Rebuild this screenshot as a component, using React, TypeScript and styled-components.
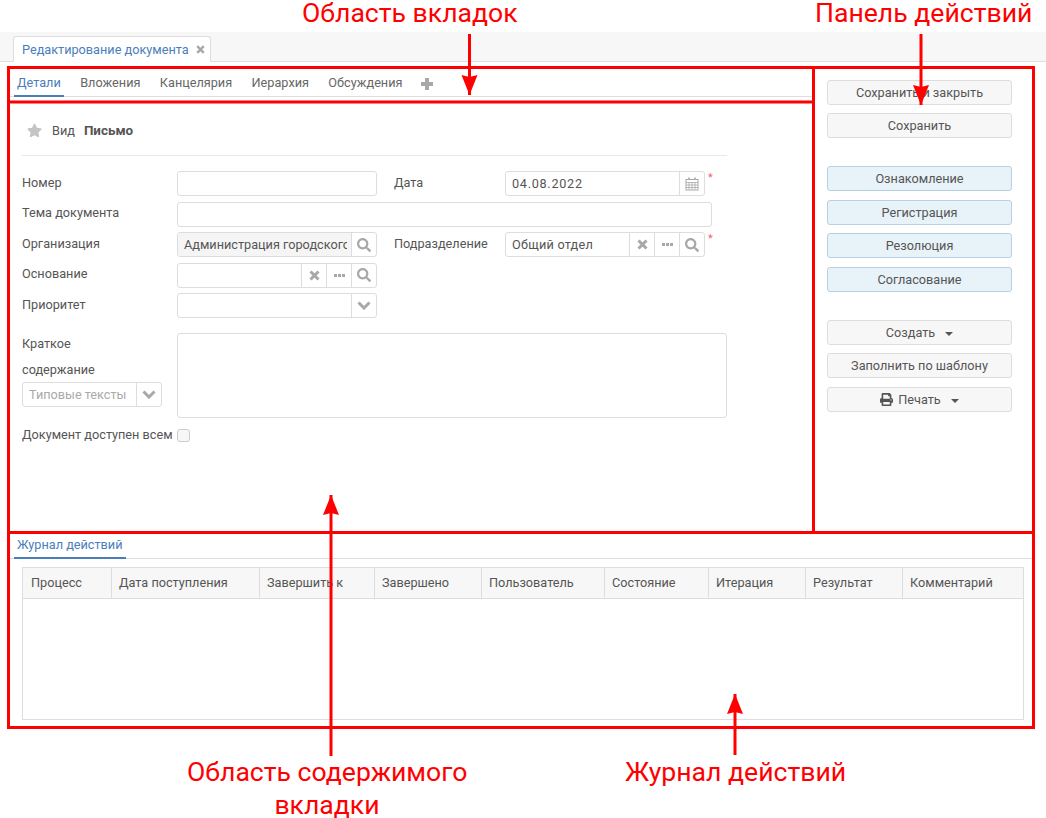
import React from 'react'
import styled, { createGlobalStyle, css } from 'styled-components'
import { FaPrint, FaSearch, FaStar } from 'react-icons/fa'

const GlobalStyle = createGlobalStyle`
  html, body {
    margin: 0;
    background: #fff;
  }
  body {
    color: #555;
    font: 12.7px/18px Roboto, "Liberation Sans", sans-serif;
  }
`

const Page = styled.div`
  position: relative;
  width: 1046px;
  height: 818px;
  overflow: hidden;
`

const DocStrip = styled.div`
  display: flex;
  align-items: flex-end;
  height: 29px;
  margin-top: 32px;
  padding-left: 13px;
  background: #f7f7f7;
  border-bottom: 1px solid #ddd;
`

const DocTab = styled.div`
  display: flex;
  align-items: center;
  gap: 7px;
  height: 25px;
  margin-bottom: -1px;
  padding: 0 5px 0 8px;
  color: #4a7ebb;
  background: #fff;
  border: 1px solid #ddd;
  border-bottom: 0;
  border-radius: 3px 3px 0 0;
`

const Workspace = styled.div`
  display: flex;
  height: 471px;
  padding-left: 8px;
`

const MainColumn = styled.div`
  width: 804px;
`

const TabBar = styled.div<{ $full?: boolean }>`
  display: flex;
  align-items: flex-end;
  gap: 13.4px;
  padding-left: 6px;
  border-bottom: 1px solid #ddd;
  ${(p) =>
    p.$full
      ? css`
          height: 25px;
        `
      : css`
          height: 26px;
          margin-top: 8px;
        `}
`

const TabItem = styled.div<{ $active?: boolean }>`
  height: 26px;
  margin-bottom: -1px;
  padding: 3px 3px 0;
  box-sizing: border-box;
  color: ${(p) => (p.$active ? '#4a7ebb' : '#666')};
  border-bottom: 2px solid ${(p) => (p.$active ? '#4a7ebb' : 'transparent')};
`

const AddTab = styled.div`
  display: flex;
  align-items: center;
  height: 25px;
  margin-left: 2px;
`

const Details = styled.div`
  padding: 0 0 0 14px;
`

const KindRow = styled.div`
  display: flex;
  align-items: center;
  gap: 10px;
  width: 705px;
  height: 59px;
  box-sizing: border-box;
  padding: 9px 0 0 5px;
  border-bottom: 1px solid #e8e8e8;
  color: #555;

  svg {
    color: #c4c4c4;
    font-size: 15px;
  }
`

const KindName = styled.b`
  margin-left: -1px;
  font-size: 13.4px;
  font-weight: 700;
`

const FormRows = styled.div`
  display: flex;
  flex-direction: column;
  gap: 5.5px;
  margin-top: 15px;
`

const Row = styled.div`
  display: flex;
  align-items: center;
  height: 25px;
`

const Label = styled.label<{ $width: number; $gapBefore?: number }>`
  flex: none;
  width: ${(p) => p.$width}px;
  margin-left: ${(p) => p.$gapBefore ?? 0}px;
  margin-top: -2px;
`

const fieldFrame = css`
  box-sizing: border-box;
  height: 25px;
  border: 1px solid #ddd;
  border-radius: 3px;
  background: #fff;
`

const Field = styled.div<{ $width: number }>`
  ${fieldFrame};
  display: flex;
  flex: none;
  width: ${(p) => p.$width}px;
  overflow: hidden;
`

const TextInput = styled.input<{ $muted?: boolean; $tracking?: number }>`
  flex: 1;
  min-width: 0;
  padding: 0 4px 0 6px;
  border: 0;
  outline: 0;
  color: #555;
  background: ${(p) => (p.$muted ? '#f5f5f5' : 'transparent')};
  font: inherit;
  letter-spacing: ${(p) => p.$tracking ?? 0}px;
`

const AddonButton = styled.span`
  display: flex;
  flex: none;
  align-items: center;
  justify-content: center;
  box-sizing: border-box;
  width: 25px;
  color: #a8a8a8;
  font-size: 14px;
  border-left: 1px solid #ddd;
`

const Dots = styled.span`
  width: 11px;
  height: 3px;
  background: repeating-linear-gradient(90deg, #a8a8a8 0 3px, transparent 3px 4px);
`

const Required = styled.span`
  align-self: flex-start;
  margin: -2px 0 0 3px;
  color: #ee6666;
  font-size: 11px;
  line-height: 18px;
`

const SummaryRow = styled.div`
  display: flex;
  margin-top: 15px;
`

const SummaryLabel = styled.div`
  flex: none;
  width: 155px;
  margin-top: -2px;
  line-height: 26px;
`

const PresetSelect = styled.div`
  ${fieldFrame};
  display: flex;
  width: 140px;
  margin-top: -1px;
  overflow: hidden;
  color: #aaa;
  line-height: 23px;
`

const PresetText = styled.span`
  flex: 1;
  padding-left: 6px;
`

const SummaryArea = styled.textarea`
  ${fieldFrame};
  width: 550px;
  height: 85px;
  padding: 6px;
  outline: 0;
  resize: none;
  font: inherit;
`

const CheckRow = styled.div`
  display: flex;
  align-items: center;
  height: 20px;
  margin-top: 7px;

  label {
    margin-top: 0;
  }
`

const CheckBox = styled.input`
  appearance: none;
  width: 13px;
  height: 13px;
  margin: 0;
  background: #f7f7f7;
  border: 1px solid #ccc;
  border-radius: 3px;
`

const ActionPanel = styled.aside`
  display: flex;
  flex: none;
  flex-direction: column;
  gap: 28px;
  width: 185px;
  padding: 17.7px 0 0 15px;
`

const ActionGroup = styled.div`
  display: flex;
  flex-direction: column;
  gap: 8.5px;
`

const ActionButton = styled.button<{ $primary?: boolean }>`
  display: flex;
  align-items: center;
  justify-content: center;
  gap: 5px;
  box-sizing: border-box;
  width: 185px;
  height: 25px;
  padding: 1px 0 0;
  color: #555;
  background: ${(p) => (p.$primary ? '#e8f2f9' : '#f7f7f7')};
  border: 1px solid ${(p) => (p.$primary ? '#b8d0e4' : '#ddd')};
  border-radius: 3px;
  font: inherit;

  svg {
    font-size: 13px;
  }
`

const Caret = styled.span`
  width: 0;
  height: 0;
  margin: 2px 0 0 5px;
  border: 4px solid transparent;
  border-top-color: #555;
  border-bottom: 0;
`

const LogSection = styled.section`
  padding: 0 12px 0 8px;
`

const LogTable = styled.table`
  width: 1001px;
  height: 153px;
  margin: 8px 0 0 14px;
  border: 1px solid #ddd;
  border-collapse: collapse;
  table-layout: fixed;
`

const HeadCell = styled.th<{ $width: number }>`
  box-sizing: border-box;
  width: ${(p) => p.$width}px;
  height: 31px;
  padding: 0 7px;
  color: #555;
  background: #f7f7f7;
  border: 1px solid #ddd;
  font-weight: 400;
  text-align: left;
  white-space: nowrap;

  &:first-child {
    padding-left: 8px;
  }
`

const Caption = styled.div<{ $left: number; $top: number; $center?: boolean }>`
  position: absolute;
  left: ${(p) => p.$left}px;
  top: ${(p) => p.$top}px;
  color: #f00;
  font-size: 26.6px;
  line-height: 21px;
  white-space: nowrap;
  ${(p) =>
    p.$center &&
    css`
      transform: translateX(-50%);
    `}
`

const MarkupLayer = styled.svg`
  position: absolute;
  inset: 0;
  pointer-events: none;
`

const tabs = ['Вложения', 'Канцелярия', 'Иерархия', 'Обсуждения']

const actionGroups = [
  [{ text: 'Сохранить и закрыть' }, { text: 'Сохранить' }],
  [
    { text: 'Ознакомление', primary: true },
    { text: 'Регистрация', primary: true },
    { text: 'Резолюция', primary: true },
    { text: 'Согласование', primary: true },
  ],
  [
    { text: 'Создать', caret: true },
    { text: 'Заполнить по шаблону' },
    { text: 'Печать', caret: true, printer: true },
  ],
]

const logColumns: [string, number][] = [
  ['Процесс', 89],
  ['Дата поступления', 148],
  ['Завершить к', 115],
  ['Завершено', 107],
  ['Пользователь', 123],
  ['Состояние', 104],
  ['Итерация', 97],
  ['Результат', 97],
  ['Комментарий', 121],
]

const CalendarIcon = () => (
  <svg fill="none" height="14" stroke="#a8a8a8" viewBox="0 0 14 14" width="14">
    <rect height="10.5" width="12" x="1" y="2.5" />
    <path d="M1 5.5h12M1 8h12M1 10.5h12M4 5.5v7M7 5.5v7M10 5.5v7" strokeWidth="0.8" />
    <path d="M4 .5v2.5M10 .5v2.5" strokeWidth="1.6" />
  </svg>
)

const CloseIcon = ({ size = 11 }: { size?: number }) => (
  <svg fill="none" height={size} stroke="#a8a8a8" strokeWidth="3" viewBox="0 0 11 11" width={size}>
    <path d="M1.5 1.5l8 8M9.5 1.5l-8 8" />
  </svg>
)

const ChevronIcon = () => (
  <svg fill="none" height="9" stroke="#a8a8a8" strokeWidth="3" viewBox="0 0 14 9" width="14">
    <path d="M1.5 1.5L7 7l5.5-5.5" />
  </svg>
)

const PlusIcon = () => (
  <svg fill="#a8a8a8" height="12" viewBox="0 0 12 12" width="12">
    <path d="M4 0h4v4h4v4H8v4H4V8H0V4h4z" />
  </svg>
)

const Arrow = ({ x, from, to }: { x: number; from: number; to: number }) => {
  const dir = to > from ? -1 : 1
  return (
    <g fill="#f00">
      <rect height={Math.abs(to - from)} width="3" x={x - 1.5} y={Math.min(from, to)} />
      <path d={`M${x} ${to}L${x - 8} ${to + dir * 20}L${x} ${to + dir * 18}L${x + 8} ${to + dir * 20}Z`} />
    </g>
  )
}

const App = () => (
  <Page>
    <GlobalStyle />
    <DocStrip>
      <DocTab>
        Редактирование документа
        <CloseIcon size={9} />
      </DocTab>
    </DocStrip>

    <Workspace>
      <MainColumn>
        <TabBar>
          <TabItem $active>Детали</TabItem>
          {tabs.map((tab) => (
            <TabItem key={tab}>{tab}</TabItem>
          ))}
          <AddTab>
            <PlusIcon />
          </AddTab>
        </TabBar>

        <Details>
          <KindRow>
            <FaStar />
            Вид
            <KindName>Письмо</KindName>
          </KindRow>

          <FormRows>
            <Row>
              <Label $width={155}>Номер</Label>
              <Field $width={200}>
                <TextInput />
              </Field>
              <Label $gapBefore={17} $width={111}>
                Дата
              </Label>
              <Field $width={200}>
                <TextInput $tracking={0.7} defaultValue="04.08.2022" />
                <AddonButton>
                  <CalendarIcon />
                </AddonButton>
              </Field>
              <Required>*</Required>
            </Row>
            <Row>
              <Label $width={155}>Тема документа</Label>
              <Field $width={535}>
                <TextInput />
              </Field>
            </Row>
            <Row>
              <Label $width={155}>Организация</Label>
              <Field $width={200}>
                <TextInput $muted defaultValue="Администрация городского округа" readOnly />
                <AddonButton>
                  <FaSearch />
                </AddonButton>
              </Field>
              <Label $gapBefore={17} $width={111}>
                Подразделение
              </Label>
              <Field $width={200}>
                <TextInput $tracking={0.25} defaultValue="Общий отдел" />
                <AddonButton>
                  <CloseIcon />
                </AddonButton>
                <AddonButton>
                  <Dots />
                </AddonButton>
                <AddonButton>
                  <FaSearch />
                </AddonButton>
              </Field>
              <Required>*</Required>
            </Row>
            <Row>
              <Label $width={155}>Основание</Label>
              <Field $width={200}>
                <TextInput />
                <AddonButton>
                  <CloseIcon />
                </AddonButton>
                <AddonButton>
                  <Dots />
                </AddonButton>
                <AddonButton>
                  <FaSearch />
                </AddonButton>
              </Field>
            </Row>
            <Row>
              <Label $width={155}>Приоритет</Label>
              <Field $width={200}>
                <TextInput />
                <AddonButton>
                  <ChevronIcon />
                </AddonButton>
              </Field>
            </Row>
          </FormRows>

          <SummaryRow>
            <SummaryLabel>
              Краткое
              <br />
              содержание
              <PresetSelect>
                <PresetText>Типовые тексты</PresetText>
                <AddonButton>
                  <ChevronIcon />
                </AddonButton>
              </PresetSelect>
            </SummaryLabel>
            <SummaryArea />
          </SummaryRow>

          <CheckRow>
            <Label $width={155}>Документ доступен всем</Label>
            <CheckBox type="checkbox" />
          </CheckRow>
        </Details>
      </MainColumn>

      <ActionPanel>
        {actionGroups.map((group, index) => (
          <ActionGroup key={index}>
            {group.map((action) => (
              <ActionButton $primary={action.primary} key={action.text}>
                {action.printer && <FaPrint />}
                {action.text}
                {action.caret && <Caret />}
              </ActionButton>
            ))}
          </ActionGroup>
        ))}
      </ActionPanel>
    </Workspace>

    <LogSection>
      <TabBar $full>
        <TabItem $active>Журнал действий</TabItem>
      </TabBar>
      <LogTable>
        <thead>
          <tr>
            {logColumns.map(([title, width]) => (
              <HeadCell $width={width} key={title}>
                {title}
              </HeadCell>
            ))}
          </tr>
        </thead>
        <tbody>
          <tr>
            <td colSpan={logColumns.length} />
          </tr>
        </tbody>
      </LogTable>
    </LogSection>

    {/* red callouts drawn over the form */}
    <MarkupLayer height="818" viewBox="0 0 1046 818" width="1046">
      <g fill="none" stroke="#f00" strokeWidth="3">
        <rect height="660" width="1025" x="8.5" y="67.5" />
        <path d="M8 102h806M813.5 68v464M8 532.5h1025" />
      </g>
      <Arrow from={34} to={95} x={469.5} />
      <Arrow from={34} to={105} x={921} />
      <Arrow from={756} to={495} x={331} />
      <Arrow from={755} to={694} x={735} />
    </MarkupLayer>
    <Caption $left={302} $top={2}>
      Область вкладок
    </Caption>
    <Caption $left={815} $top={2}>
      Панель действий
    </Caption>
    <Caption $left={187} $top={761}>
      Область содержимого
    </Caption>
    <Caption $center $left={327} $top={794}>
      вкладки
    </Caption>
    <Caption $left={625} $top={761}>
      Журнал действий
    </Caption>
  </Page>
)

export default App
